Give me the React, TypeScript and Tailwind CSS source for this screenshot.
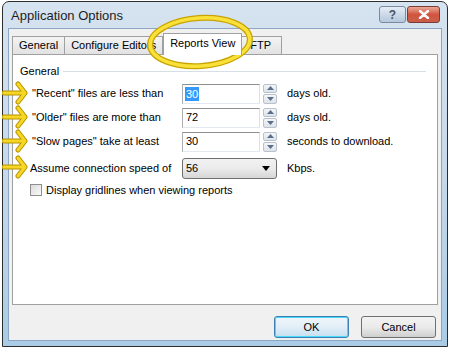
import React from 'react';

const font = { fontFamily: '"Liberation Sans", Arial, sans-serif' };

const Arrow = ({ top }: { top: number }) => (
  <svg
    className="absolute left-[2px]"
    style={{ top }}
    width="28"
    height="24"
    viewBox="0 0 28 24"
  >
    <g fill="none" strokeLinecap="round" strokeLinejoin="round">
      <path d="M2 12 H22 M16 3 L23 12 L16 21" stroke="#b59300" strokeWidth="5" />
      <path d="M2 12 H22 M16 3 L23 12 L16 21" stroke="#f7d724" strokeWidth="3" />
    </g>
  </svg>
);

const Spinner = () => (
  <div className="ml-[3px] flex h-[20px] w-[14px] flex-col gap-[1px]">
    <div className="flex flex-1 items-center justify-center rounded-[2px] border border-[#b8c2cc] bg-gradient-to-b from-[#f4f6f8] to-[#dde3e9]">
      <svg width="7" height="4" viewBox="0 0 7 4"><path d="M0 4 L3.5 0 L7 4 Z" fill="#5a6e8c" /></svg>
    </div>
    <div className="flex flex-1 items-center justify-center rounded-[2px] border border-[#b8c2cc] bg-gradient-to-b from-[#f4f6f8] to-[#dde3e9]">
      <svg width="7" height="4" viewBox="0 0 7 4"><path d="M0 0 L3.5 4 L7 0 Z" fill="#5a6e8c" /></svg>
    </div>
  </div>
);

const SpinRow = ({ label, value, unit, selected }: { label: string; value: string; unit: string; selected?: boolean }) => (
  <div className="flex h-[24px] items-center">
    <div className="w-[162px] whitespace-nowrap pl-[12px]">{label}</div>
    <div className="flex h-[20px] w-[78px] items-center border border-t-[#8e8f8f] border-l-[#abadb3] border-r-[#dbdfe6] border-b-[#e3e9ef] bg-white pl-[2px]">
      <span className={selected ? 'bg-[#3399ff] px-[1px] leading-[14px] text-white' : 'px-[1px]'}>{value}</span>
    </div>
    <Spinner />
    <div className="ml-[10px]">{unit}</div>
  </div>
);

export default function App() {
  return (
    <div className="relative h-[349px] w-[450px] overflow-hidden bg-white text-[11px] text-black" style={font}>
      <div className="ml-[2px] mt-[1px] flex h-[346px] w-[446px] flex-col rounded-t-[7px] border border-[#2d2d2d] bg-gradient-to-b from-[#d6e3f0] via-[#c6d8ea] to-[#a9cbe6] px-[5px] pb-[5px]">
        {/* Title bar */}
        <div className="flex h-[26px] items-center">
          <div className="pl-[3px] pt-[1px] text-[13px] text-[#1e1e1e]">Application Options</div>
          <div className="ml-auto mr-[2px] mt-[4px] flex gap-[1px] self-start">
            <div className="flex h-[17px] w-[27px] items-center justify-center rounded-[3px] border border-[#7a8ba0] bg-gradient-to-b from-[#e6eef6] via-[#ccd9e7] to-[#b6c8dc] text-[12px] font-bold text-[#44556b]">
              ?
            </div>
            <div className="flex h-[17px] w-[33px] items-center justify-center rounded-[3px] border border-[#7b3b32] bg-gradient-to-b from-[#e9a897] via-[#d1543f] to-[#c9604a]">
              <svg width="12" height="9" viewBox="0 0 12 9">
                <path d="M2 1 L10 8 M10 1 L2 8" stroke="#fff" strokeWidth="2.4" strokeLinecap="round" />
              </svg>
            </div>
          </div>
        </div>

        {/* Client area */}
        <div className="flex flex-1 flex-col border border-[#8da6c2] bg-[#f0f0f0] px-[3px] pt-[3px]">
          {/* Tabs */}
          <div className="flex h-[22px] items-end">
            <div className="flex h-[18px] items-center border border-b-0 border-[#a0a0a0] bg-gradient-to-b from-[#f4f4f4] to-[#e2e2e2] px-[6px]">General</div>
            <div className="flex h-[18px] items-center border border-b-0 border-l-0 border-[#a0a0a0] bg-gradient-to-b from-[#f4f4f4] to-[#e2e2e2] px-[6px]">Configure Editors</div>
            <div className="relative z-10 mb-[-1px] flex h-[22px] items-center border border-b-0 border-[#a0a0a0] bg-white px-[6px] pb-[2px]">Reports View</div>
            <div className="flex h-[18px] items-center border border-b-0 border-l-0 border-[#a0a0a0] bg-gradient-to-b from-[#f4f4f4] to-[#e2e2e2] pl-[8px] pr-[10px]">FTP</div>
          </div>

          {/* Panel */}
          <div className="h-[251px] w-[426px] border border-[#a0a0a0] bg-white px-[7px] pt-[8px]">
            <div className="flex items-center">
              <span className="pr-[4px]">General</span>
              <div className="mr-[4px] h-[1px] flex-1 bg-[#d5dfe5]" />
            </div>
            <div className="mt-[2px] flex flex-col">
              <SpinRow label={'"Recent" files are less than'} value="30" unit="days old." selected />
              <SpinRow label={'"Older" files are more than'} value="72" unit="days old." />
              <SpinRow label={'"Slow pages" take at least'} value="30" unit="seconds to download." />
              <div className="mt-[2px] flex h-[25px] items-center">
                <div className="w-[162px] whitespace-nowrap pl-[10px]">Assume connection speed of</div>
                <div className="flex h-[21px] w-[95px] items-center rounded-[3px] border border-[#707070] bg-gradient-to-b from-[#f2f2f2] via-[#ebebeb] to-[#d6d6d6] pl-[3px] pr-[6px]">
                  <span>56</span>
                  <svg className="ml-auto" width="8" height="5" viewBox="0 0 8 5"><path d="M0 0 H8 L4 5 Z" fill="#000" /></svg>
                </div>
                <div className="ml-[10px]">Kbps.</div>
              </div>
              <div className="mt-[1px] flex items-center pl-[10px]">
                <div className="h-[12px] w-[12px] border border-[#8f8f8f] bg-gradient-to-br from-[#dcdcdc] to-[#fafafa]" />
                <span className="ml-[4px]">Display gridlines when viewing reports</span>
              </div>
            </div>
          </div>

          {/* Buttons */}
          <div className="mt-[11px] flex justify-end gap-[12px] pr-[2px]">
            <button className="h-[22px] w-[75px] rounded-[3px] border border-[#3c7fb1] bg-gradient-to-b from-[#f0f6fa] via-[#e2eef7] to-[#c6dff0] shadow-[inset_0_0_0_1px_#48d8fb]">OK</button>
            <button className="h-[22px] w-[75px] rounded-[3px] border border-[#707070] bg-gradient-to-b from-[#f2f2f2] via-[#ebebeb] to-[#cfcfcf]">Cancel</button>
          </div>
        </div>
      </div>

      {/* Annotations */}
      <svg className="absolute left-[146px] top-[13px]" width="108" height="58" viewBox="0 0 108 58">
        <ellipse cx="54" cy="29" rx="50" ry="24" transform="rotate(-4 54 29)" fill="none" stroke="#c9a400" strokeWidth="6" />
        <ellipse cx="54" cy="29" rx="50" ry="24" transform="rotate(-4 54 29)" fill="none" stroke="#f9e13a" strokeWidth="3.5" />
      </svg>
      <Arrow top={81} />
      <Arrow top={105} />
      <Arrow top={129} />
      <Arrow top={155} />
    </div>
  );
}
